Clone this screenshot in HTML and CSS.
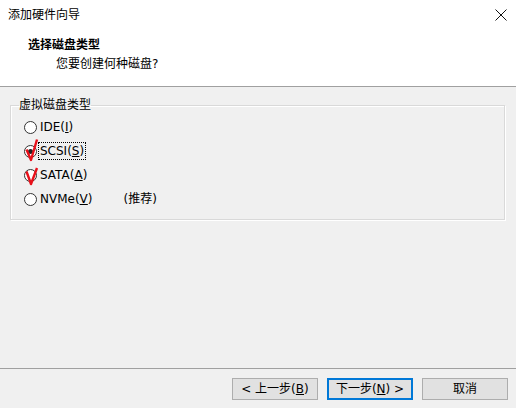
FILE: index.html
```html
<!DOCTYPE html>
<html lang="zh-CN">
<head>
<meta charset="utf-8">
<title>添加硬件向导</title>
<link rel="stylesheet" href="styles.css">
</head>
<body>
<div class="window">
  <div class="top">
    <div class="titlebar">
      <span class="title">添加硬件向导</span>
      <svg class="close" width="12" height="12" viewBox="0 0 12 12"><path d="M0.5 0.5 L11.5 11.5 M11.5 0.5 L0.5 11.5" stroke="#111" stroke-width="1" fill="none"/></svg>
    </div>
    <div class="header">
      <div class="h-title">选择磁盘类型</div>
      <div class="h-sub">您要创建何种磁盘?</div>
    </div>
  </div>
  <main class="content">
    <fieldset class="group">
      <legend>虚拟磁盘类型</legend>
      <div class="row">
        <span class="radio"></span>
        <span class="label">IDE(<u>I</u>)</span>
      </div>
      <div class="row">
        <span class="radio checked"></span>
        <svg class="mark" width="16" height="24" viewBox="0 0 16 24"><path d="M1.5 10.5 L6 21 L12 0.5" stroke="#e8101a" stroke-width="2.4" fill="none" stroke-linejoin="round"/></svg>
        <span class="label focus">SCSI(<u>S</u>)</span>
      </div>
      <div class="row">
        <span class="radio"></span>
        <svg class="mark mark2" width="16" height="24" viewBox="0 0 16 24"><path d="M1.5 4.5 L6 17 L12 1" stroke="#e8101a" stroke-width="2.4" fill="none" stroke-linejoin="round"/></svg>
        <span class="label">SATA(<u>A</u>)</span>
      </div>
      <div class="row">
        <span class="radio"></span>
        <span class="label">NVMe(<u>V</u>)</span>
        <span class="note">(推荐)</span>
      </div>
    </fieldset>
  </main>
  <footer class="footer">
    <button class="btn">&lt; 上一步(<u>B</u>)</button>
    <button class="btn default">下一步(<u>N</u>) &gt;</button>
    <button class="btn">取消</button>
  </footer>
</div>
</body>
</html>
```

FILE: styles.css
```css
* { box-sizing: border-box; }
html, body {
  margin: 0;
  padding: 0;
  width: 516px;
  height: 408px;
  overflow: hidden;
  background: #f0f0f0;
  font-family: "DejaVu Sans", "Noto Sans CJK SC", sans-serif;
  font-size: 12px;
  color: #000;
}
.window {
  width: 516px;
  height: 408px;
  display: flex;
  flex-direction: column;
}
.top {
  background: #fff;
  height: 87px;
  border-bottom: 1px solid #a0a0a0;
}
.titlebar {
  height: 30px;
  display: flex;
  align-items: center;
  justify-content: space-between;
  padding: 0 9px 0 8px;
}
.title { line-height: 16px; }
.close { display: block; margin-top: -1px; }
.header {
  padding-top: 7px;
}
.h-title {
  font-weight: bold;
  padding-left: 28px;
  line-height: 16px;
  height: 18px;
}
.h-sub {
  padding-left: 56px;
  line-height: 16px;
  margin-top: 1px;
}
.content {
  flex: 1;
  padding: 10px 11px 0 10px;
}
.group {
  margin: 0;
  width: 495px;
  border: 1px solid #d9d9d9;
  box-shadow: inset 1px 1px 0 #fff, 1px 1px 0 #fff;
  padding: 2px 8px 8px 8px;
}
.group legend {
  padding: 0;
  line-height: 16px;
  margin-left: 0;
}
.row {
  position: relative;
  height: 24px;
  display: flex;
  align-items: center;
  padding-left: 5px;
}
.radio {
  width: 13px;
  height: 13px;
  border: 1px solid #333;
  border-radius: 50%;
  background: #fff;
  flex: none;
  position: relative;
}
.radio.checked::after {
  content: "";
  position: absolute;
  left: 3px;
  top: 3px;
  width: 5px;
  height: 5px;
  border-radius: 50%;
  background: #222;
}
.label {
  margin-left: 1px;
  padding: 0 1px;
  line-height: 16px;
  border: 1px dotted transparent;
}
.label u { text-decoration-thickness: 1px; text-underline-offset: 1px; }
.label.focus { border-color: #000; }
.mark {
  position: absolute;
  left: 6px;
  top: 0px;
}
.mark2 { top: 4px; }
.note {
  margin-left: 29px;
  line-height: 16px;
}
.footer {
  height: 40px;
  border-top: 1px solid #a0a0a0;
  display: flex;
  justify-content: flex-end;
  align-items: flex-start;
  gap: 9px;
  padding: 9px 8px 0 0;
}
.btn {
  width: 86px;
  height: 22px;
  border: 1px solid #adadad;
  background: #e1e1e1;
  font-family: inherit;
  font-size: 12px;
  line-height: 16px;
  padding: 0;
  color: #000;
}
.btn.default {
  border: 2px solid #0078d7;
}
```
